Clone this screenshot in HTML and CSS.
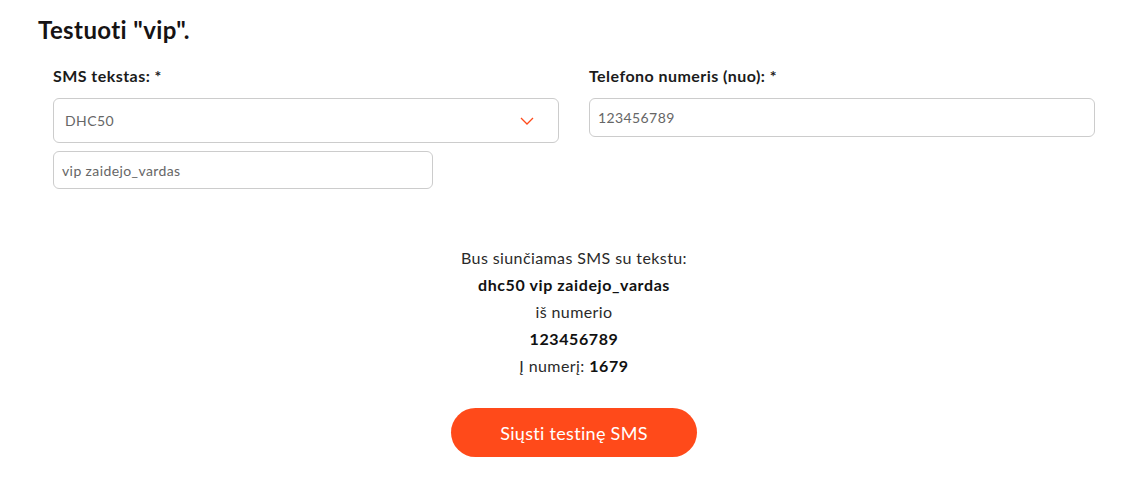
FILE: index.html
```html
<!DOCTYPE html>
<html lang="lt">
<head>
<meta charset="utf-8">
<link rel="stylesheet" href="styles.css">
</head>
<body>
<div class="page">
  <h2 class="title">Testuoti "vip".</h2>
  <div class="row">
    <div class="col">
      <label class="label">SMS tekstas: *</label>
      <div class="select">
        <span class="select-value">DHC50</span>
        <svg class="chev" width="14" height="8" viewBox="0 0 14 8"><path d="M1 1 L7 7 L13 1" fill="none" stroke="#ff4a1a" stroke-width="1.3"/></svg>
      </div>
      <div class="input input-short">vip zaidejo_vardas</div>
    </div>
    <div class="col">
      <label class="label">Telefono numeris (nuo): *</label>
      <div class="input">123456789</div>
    </div>
  </div>
  <div class="summary">
    <p>Bus siunčiamas SMS su tekstu:</p>
    <p><b>dhc50 vip zaidejo_vardas</b></p>
    <p>iš numerio</p>
    <p><b>123456789</b></p>
    <p>Į numerį: <b>1679</b></p>
    <button class="btn">Siųsti testinę SMS</button>
  </div>
</div>
</body>
</html>
```
FILE: styles.css
```css
* { box-sizing: border-box; }
body {
  margin: 0;
  font-family: Lato, "Open Sans", sans-serif;
  color: #1b1b1b;
  background: #fff;
}
.page {
  width: 1072px;
  margin-left: 38px;
  padding-top: 14px;
}
.title {
  margin: 0;
  font-size: 24px;
  font-weight: 700;
  line-height: 32px;
  letter-spacing: 0.4px;
  color: #161314;
}
.row {
  display: flex;
  margin-top: 20px;
}
.col {
  flex: 1;
  padding: 0 15px;
  display: flex;
  flex-direction: column;
  align-items: flex-start;
}
.label {
  font-size: 16px;
  font-weight: 700;
  line-height: 20px;
  letter-spacing: 0.45px;
  margin-bottom: 12px;
}
.select, .input {
  width: 100%;
  border: 1px solid #cccccc;
  border-radius: 6px;
  font-size: 14px;
  letter-spacing: 0.4px;
  color: #666;
  display: flex;
  align-items: center;
}
.select {
  height: 45px;
  padding: 0 24px 0 11px;
  justify-content: space-between;
}
.input {
  height: 39px;
  padding: 0 8px;
}
.input-short {
  width: 75%;
  height: 38px;
  margin-top: 8px;
}
.summary {
  margin-top: 55px;
  text-align: center;
  font-size: 16px;
  line-height: 27px;
  letter-spacing: 0.4px;
  color: #2a2a2a;
}
.summary p { margin: 0; }
.summary b { font-weight: 700; color: #111; letter-spacing: 0.6px; }
.btn {
  margin-top: 29px;
  width: 246px;
  height: 49px;
  border: 0;
  border-radius: 25px;
  background: #ff4a1a;
  color: #fff;
  font-family: inherit;
  font-size: 18px;
  letter-spacing: 0.3px;
  cursor: pointer;
}
```
